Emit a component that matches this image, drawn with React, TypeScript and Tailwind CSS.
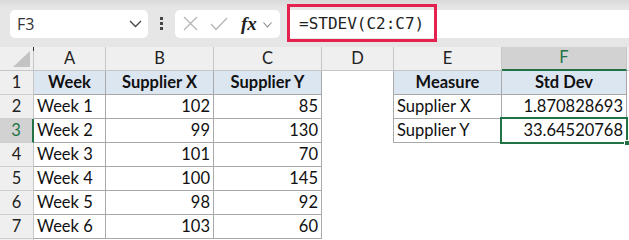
import React from "react";

type CellDef = { text?: string; w: string; cls: string; align?: "l" | "r" | "c"; bold?: boolean };

function Cell({ c, children }: { c: CellDef; children?: React.ReactNode }) {
  const al = c.align === "r" ? "justify-end pr-[3px]" : c.align === "c" ? "justify-center" : "justify-start pl-[3px]";
  return (
    <div className={`relative h-[24px] flex items-end pb-[3px] shrink-0 ${c.w} ${c.cls} ${al} ${c.bold ? "font-bold" : ""}`}>
      <span className="leading-[17px] whitespace-nowrap">{c.text}</span>
      {children}
    </div>
  );
}

const B = "border-r border-b border-[#a9a9a9]";
const BL = "border-l border-r border-b border-[#a9a9a9]";
const HEAD = "bg-[#dce6f1]";

function RowHeader({ n, sel }: { n: string; sel?: boolean }) {
  return (
    <div
      className={`h-[24px] w-[34px] shrink-0 flex items-end justify-center pb-[3px] border-b border-[#cfcfcf] ${
        sel ? "bg-[#d2d2d2] text-[#217346] border-r-2 border-r-[#217346]" : "bg-[#efefef] text-[#222] border-r border-r-[#c6c6c6]"
      }`}
    >
      <span className="leading-[17px]">{n}</span>
    </div>
  );
}

function DataRow({ n, cells, sel, children }: { n: string; cells: CellDef[]; sel?: boolean; children?: React.ReactNode }) {
  return (
    <div className="flex h-[24px]">
      <RowHeader n={n} sel={sel} />
      {cells.map((c, i) => (
        <Cell key={i} c={c} />
      ))}
      {children}
    </div>
  );
}

const data = [
  ["Week 1", "102", "85"],
  ["Week 2", "99", "130"],
  ["Week 3", "101", "70"],
  ["Week 4", "100", "145"],
  ["Week 5", "98", "92"],
  ["Week 6", "103", "60"],
];

function ColHeader() {
  const cols: [string, string, boolean?][] = [
    ["A", "w-[72px]"],
    ["B", "w-[108px]"],
    ["C", "w-[108px]"],
    ["D", "w-[72px]"],
    ["E", "w-[108px]"],
    ["F", "w-[125px]", true],
  ];
  return (
    <div className="flex h-[24px]">
      <div className="relative w-[34px] h-[24px] shrink-0 bg-[#efefef] border-r border-b border-[#c6c6c6]">
        <svg className="absolute left-[13px] top-[4px]" width="17" height="16" viewBox="0 0 17 16">
          <polygon points="17,0 17,16 0,16" fill="#c3c3c3" />
        </svg>
        <div className="absolute right-[-1px] top-0 w-[1px] h-[4px] bg-[#333]" />
      </div>
      {cols.map(([l, w, s]) => (
        <div
          key={l}
          className={`${w} h-[24px] shrink-0 flex items-end justify-center pb-[3px] border-r border-[#c6c6c6] ${
            s ? "bg-[#d2d2d2] text-[#217346] border-b-2 border-b-[#217346]" : "bg-[#efefef] text-[#222] border-b border-b-[#c6c6c6]"
          }`}
        >
          <span className="leading-[17px]">{l}</span>
        </div>
      ))}
      <div className="flex-1 h-[24px] bg-[#efefef] border-b border-[#c6c6c6]" />
    </div>
  );
}

export default function App() {
  return (
    <div className="w-[629px] h-[240px] overflow-hidden bg-white text-[#111] font-['Lato',sans-serif] text-[16.5px]">
      {/* formula band */}
      <div className="relative h-[47px] flex items-center bg-[linear-gradient(#d9d9d9,#e6e6e6_8px,#e6e6e6)]">
        <div className="ml-[10px] w-[138px] h-[28px] rounded-[5px] bg-white flex items-center justify-between pl-[7px] pr-[6px]">
          <span className="font-['Open_Sans',sans-serif] text-[16px] text-[#333] leading-none">F3</span>
          <svg width="13" height="8" viewBox="0 0 13 8">
            <polyline points="1,1 6.5,6.5 12,1" fill="none" stroke="#444" strokeWidth="1.3" />
          </svg>
        </div>
        <div className="w-[27px] flex flex-col items-center gap-[2px]">
          <div className="w-[3px] h-[3px] bg-[#444]" />
          <div className="w-[3px] h-[3px] bg-[#444]" />
          <div className="w-[3px] h-[3px] bg-[#444]" />
        </div>
        <div className="w-[105px] h-[28px] rounded-[5px] bg-white flex items-center pl-[8px]">
          <svg width="15" height="15" viewBox="0 0 15 15">
            <path d="M1 1 L14 14 M14 1 L1 14" stroke="#b5b5b5" strokeWidth="1.3" />
          </svg>
          <svg className="ml-[12px]" width="18" height="14" viewBox="0 0 18 14">
            <polyline points="1,7 6,12.5 17,1" fill="none" stroke="#b5b5b5" strokeWidth="1.3" />
          </svg>
          <span className="ml-[13px] font-['Liberation_Serif',serif] italic font-bold text-[19px] text-[#222] leading-none">fx</span>
          <svg className="ml-[6px] mt-[2px]" width="9" height="6" viewBox="0 0 9 6">
            <polyline points="0.5,0.5 4.5,5 8.5,0.5" fill="none" stroke="#888" strokeWidth="1.1" />
          </svg>
        </div>
        <div className="relative ml-[8px] flex-1 h-[28px] bg-white flex items-center pl-[11px]">
          <span className="font-['DejaVu_Sans_Mono',monospace] text-[16px] text-[#222] leading-none">=STDEV(C2:C7)</span>
          <div className="absolute left-[-1px] top-[-6px] w-[150px] h-[38px] border-[3px] border-[#e5214f]" />
        </div>
      </div>
      {/* grid */}
      <ColHeader />
      <DataRow
        n="1"
        cells={[
          { text: "Week", w: "w-[72px]", cls: `${B} ${HEAD}`, align: "c", bold: true },
          { text: "Supplier X", w: "w-[108px]", cls: `${B} ${HEAD}`, align: "c", bold: true },
          { text: "Supplier Y", w: "w-[108px]", cls: `${B} ${HEAD}`, align: "c", bold: true },
          { w: "w-[71px]", cls: "" },
          { text: "Measure", w: "w-[109px]", cls: `${BL} ${HEAD}`, align: "c", bold: true },
          { text: "Std Dev", w: "w-[125px]", cls: `${B} ${HEAD}`, align: "c", bold: true },
        ]}
      />
      {data.map((r, i) => {
        const cells: CellDef[] = [
          { text: r[0], w: "w-[72px]", cls: B },
          { text: r[1], w: "w-[108px]", cls: B, align: "r" },
          { text: r[2], w: "w-[108px]", cls: B, align: "r" },
          { w: "w-[71px]", cls: "" },
        ];
        if (i === 0) {
          cells.push({ text: "Supplier X", w: "w-[109px]", cls: BL });
          cells.push({ text: "1.870828693", w: "w-[125px]", cls: B, align: "r" });
        } else if (i === 1) {
          cells.push({ text: "Supplier Y", w: "w-[109px]", cls: BL });
        }
        return (
          <DataRow key={i} n={String(i + 2)} cells={cells} sel={i === 1}>
            {i === 1 && (
              <Cell c={{ text: "33.64520768", w: "w-[125px]", cls: B, align: "r" }}>
                <div className="absolute left-[-2px] top-[-2px] right-[-2px] bottom-[-2px] border-2 border-[#217346]" />
                <div className="absolute right-[-4px] bottom-[-4px] w-[6px] h-[6px] bg-[#217346] border border-white" />
              </Cell>
            )}
          </DataRow>
        );
      })}
      <DataRow n="" cells={[]} />
    </div>
  );
}
